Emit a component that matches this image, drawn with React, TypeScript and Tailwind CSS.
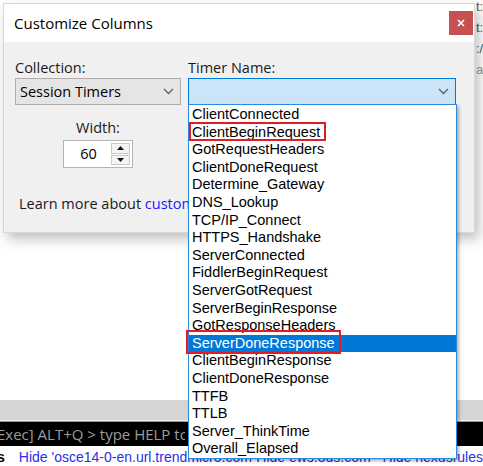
import React from "react";

const timers = [
  "ClientConnected",
  "ClientBeginRequest",
  "GotRequestHeaders",
  "ClientDoneRequest",
  "Determine_Gateway",
  "DNS_Lookup",
  "TCP/IP_Connect",
  "HTTPS_Handshake",
  "ServerConnected",
  "FiddlerBeginRequest",
  "ServerGotRequest",
  "ServerBeginResponse",
  "GotResponseHeaders",
  "ServerDoneResponse",
  "ClientBeginResponse",
  "ClientDoneResponse",
  "TTFB",
  "TTLB",
  "Server_ThinkTime",
  "Overall_Elapsed",
];

const boxed = ["ClientBeginRequest", "ServerDoneResponse"];

function Chevron({ color }: { color: string }) {
  return (
    <svg width="11" height="7" viewBox="0 0 11 7" fill="none">
      <path d="M1 1l4.5 4.5L10 1" stroke={color} strokeWidth="1.3" />
    </svg>
  );
}

export default function App() {
  return (
    <div className="relative w-[483px] h-[466px] overflow-hidden bg-white font-['Open_Sans',sans-serif]">
      {/* page behind the dialog */}
      <div className="flex flex-col h-full">
        <div className="flex-1 text-[#555] text-[13px] leading-[21px] pl-[476px] font-['Liberation_Sans',sans-serif]">
          <div className="-mt-[4px] whitespace-nowrap">t:</div>
          <div className="whitespace-nowrap">t:/</div>
          <div className="whitespace-nowrap">:/</div>
          <div className="whitespace-nowrap text-[#999]">a.</div>
        </div>
        <div className="h-[21px] bg-[#d5d5d5] border-b border-[#f0f0f0]" />
        <div className="h-[25px] bg-black border-t border-[#9a9a9a] flex items-center text-[15px] text-[#9c9c9c] whitespace-nowrap">
          <span className="w-[188px] overflow-hidden -ml-[3px]">Exec] ALT+Q &gt; type HELP to learn more</span>
        </div>
        <div className="h-[20px] flex items-end text-[14px] leading-[17px] whitespace-nowrap font-['Liberation_Sans',sans-serif]">
          <span className="font-bold text-black -ml-[3px] w-[23px]">s</span>
          <span className="text-[#2d2de6] w-[250px]">Hide 'osce14-0-en.url.trendmicro.com</span>
          <span className="text-[#2d2de6] w-[133px]">Hide ews.3ds.com</span>
          <span className="text-[#2d2de6]">Hide nexusrules</span>
        </div>
      </div>

      {/* dialog */}
      <div className="absolute left-[3px] top-[3px] w-[472px] h-[230px] flex flex-col border border-[#d8d8d8] shadow-[4px_6px_12px_rgba(0,0,0,0.25)]">
        <div className="h-[38px] bg-white flex items-center justify-between pl-[10px] pr-[1px]">
          <span className="text-[15px] text-black">Customize Columns</span>
          <div className="w-[24px] h-[24px] bg-[#c75050] flex items-center justify-center">
            <svg width="8" height="8" viewBox="0 0 8 8">
              <path d="M1 1l6 6M7 1l-6 6" stroke="white" strokeWidth="1.6" />
            </svg>
          </div>
        </div>
        <div className="flex-1 bg-[#f0f0f0] pl-[11px] pt-[15px]">
          <div className="flex gap-[7px]">
            <div className="flex flex-col">
              <span className="text-[14.5px] text-[#1a1a1a] leading-[21px]">Collection:</span>
              <div className="w-[166px] h-[27px] bg-[#e5e5e5] border border-[#adadad] flex items-center justify-between pl-[4px] pr-[6px]">
                <span className="text-[14.5px] text-black">Session Timers</span>
                <Chevron color="#606060" />
              </div>
            </div>
            <div className="flex flex-col">
              <span className="text-[14.5px] text-[#1a1a1a] leading-[21px]">Timer Name:</span>
              <div className="w-[268px] h-[27px] bg-[#cce4f7] border border-[#0078d7] flex items-center justify-end pr-[6px]">
                <Chevron color="#606060" />
              </div>
            </div>
          </div>
          <div className="w-[166px] flex flex-col items-center mt-[13px]">
            <span className="text-[14.5px] text-[#1a1a1a] leading-[20px]">Width:</span>
            <div className="mt-[2px] w-[70px] h-[28px] bg-white border border-[#b4b4b4] flex items-center">
              <span className="flex-1 text-center text-[14.5px] text-black pl-[2px]">60</span>
              <div className="w-[19px] h-[22px] mr-[2px] flex flex-col gap-[1px]">
                <div className="flex-1 bg-[#f4f4f4] border border-[#c9c9c9] flex items-center justify-center">
                  <svg width="7" height="4" viewBox="0 0 7 4"><path d="M0 4L3.5 0L7 4Z" fill="#111" /></svg>
                </div>
                <div className="flex-1 bg-[#f4f4f4] border border-[#c9c9c9] flex items-center justify-center">
                  <svg width="7" height="4" viewBox="0 0 7 4"><path d="M0 0L3.5 4L7 0Z" fill="#111" /></svg>
                </div>
              </div>
            </div>
          </div>
          <div className="mt-[25px] pl-[4px] w-[174px] overflow-hidden text-[14.5px] text-[#1a1a1a] whitespace-nowrap">
            Learn more about <span className="text-[#1a1aff]">customizing columns</span>
          </div>
        </div>
      </div>

      {/* dropdown list */}
      <div className="absolute left-[188px] top-[104px] w-[269px] h-[355px] bg-white border border-[#2c8be0] shadow-[2px_2px_3px_rgba(0,0,0,0.3)] pt-[1px] font-['Liberation_Sans',sans-serif]">
        {timers.map((t) => {
          const sel = t === "ServerDoneResponse";
          return (
            <div
              key={t}
              className={`h-[17.6px] leading-[17.6px] pl-[3px] text-[14.5px] whitespace-nowrap ${sel ? "bg-[#0078d7] text-white" : "text-black"}`}
            >
              <span className={boxed.includes(t) ? "relative" : ""}>
                {t}
                {boxed.includes(t) && (
                  <span
                    className={`absolute border-2 border-[#e51b23] ${sel ? "-left-[6px] -right-[6px] -top-[5px] -bottom-[3px]" : "-left-[3px] -right-[6px] -top-[2px] -bottom-[1px]"}`}
                  />
                )}
              </span>
            </div>
          );
        })}
      </div>
    </div>
  );
}
